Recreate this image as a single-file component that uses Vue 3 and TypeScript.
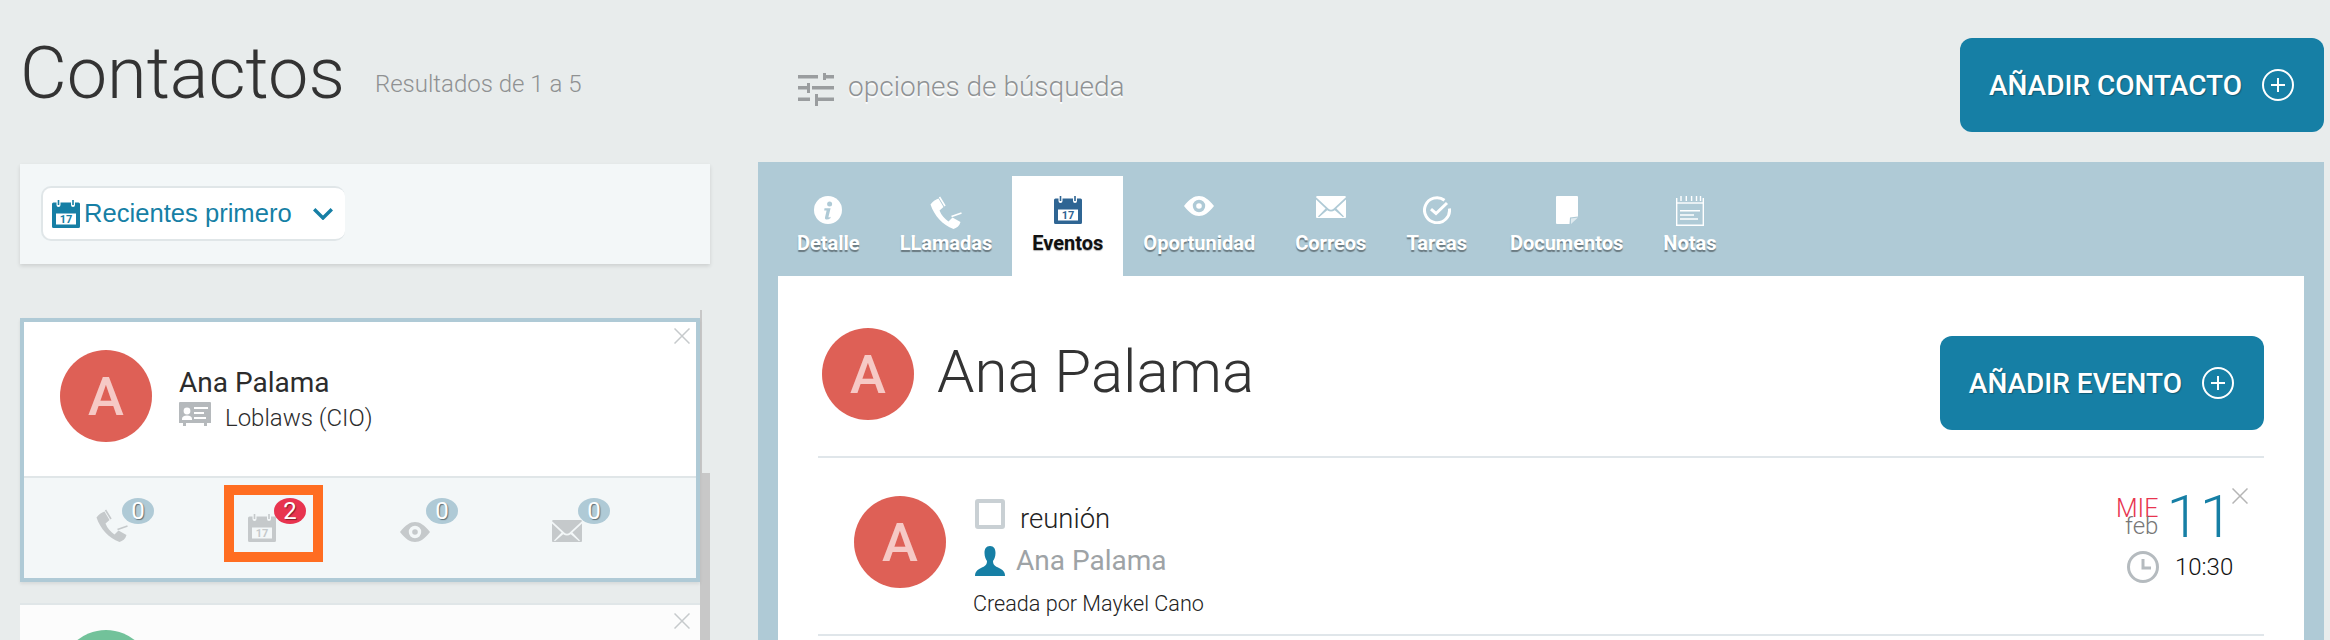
<script setup lang="ts">
type Tab = { label: string; icon: string; w: number; h: number; active?: boolean };
type Stat = { icon: string; w: number; h: number; count: number; hot?: boolean };

const tabs: Tab[] = [
    { label: "Detalle", icon: "i-info", w: 28, h: 28 },
    { label: "LLamadas", icon: "i-phone", w: 32, h: 33 },
    { label: "Eventos", icon: "i-calendar", w: 28, h: 28, active: true },
    { label: "Oportunidad", icon: "i-eye", w: 30, h: 20 },
    { label: "Correos", icon: "i-mail", w: 30, h: 22 },
    { label: "Tareas", icon: "i-task", w: 28, h: 28 },
    { label: "Documentos", icon: "i-doc", w: 22, h: 28 },
    { label: "Notas", icon: "i-notes", w: 28, h: 30 },
];

const stats: Stat[] = [
    { icon: "i-phone", w: 32, h: 33, count: 0 },
    { icon: "i-calendar", w: 28, h: 28, count: 2, hot: true },
    { icon: "i-eye", w: 30, h: 20, count: 0 },
    { icon: "i-mail", w: 30, h: 22, count: 0 },
];
</script>

<template>
    <svg class="defs" aria-hidden="true">
        <symbol id="i-calendar" viewBox="0 0 28 28">
            <path fill="currentColor" fill-rule="evenodd" d="M1.5 2.5H4.5V5a2 2 0 0 0 4 0V2.5H19V5a2 2 0 0 0 4 0V2.5H26.5A1.5 1.5 0 0 1 28 4V26.5A1.5 1.5 0 0 1 26.5 28H1.5A1.5 1.5 0 0 1 0 26.5V4A1.5 1.5 0 0 1 1.5 2.5ZM4 13.5V24.5H24V13.5Z" />
            <rect fill="currentColor" x="5.7" y="0" width="1.6" height="5" />
            <rect fill="currentColor" x="20.2" y="0" width="1.6" height="5" />
            <text x="14" y="23.2" text-anchor="middle" font-size="11" font-weight="700" font-family="Roboto, sans-serif" fill="currentColor">17</text>
        </symbol>
        <symbol id="i-phone" viewBox="0 0 32 33">
            <path fill="currentColor" d="M0.5 8.5C2.5 5.5 5.5 3.5 8.5 2.5L13.5 11L9.5 14.5C11.5 19.5 14.5 22.5 18.5 25.5L22.5 21.5L30.5 26C29.5 30 26.5 32 23.5 33C12.5 29 4.5 20 0.5 8.5Z" />
            <path fill="none" stroke="currentColor" stroke-width="1.6" d="M9.5 1L15 10M21.5 20.5L31.5 17" />
        </symbol>
        <symbol id="i-eye" viewBox="0 0 30 20">
            <path fill="currentColor" fill-rule="evenodd" d="M0 10C5.5 3 10 0 15 0C20 0 24.5 3 30 10C24.5 17 20 20 15 20C10 20 5.5 17 0 10ZM15 3.8A6.2 6.2 0 1 0 15 16.2A6.2 6.2 0 1 0 15 3.8ZM15 7.2A2.8 2.8 0 1 1 15 12.8A2.8 2.8 0 1 1 15 7.2Z" />
        </symbol>
        <symbol id="i-mail" viewBox="0 0 30 22">
            <path fill="currentColor" d="M1 0H29A1 1 0 0 1 29.6 1.4L17.5 12.8Q15 14.6 12.5 12.8L0.4 1.4A1 1 0 0 1 1 0Z" />
            <path fill="currentColor" d="M0 3.6V21A1 1 0 0 0 1 22H29A1 1 0 0 0 30 21V3.6L20.4 12.6L28 20.4L27 21.2L18.8 14.2Q15 17 11.2 14.2L3 21.2L2 20.4L9.6 12.6Z" />
        </symbol>
        <symbol id="i-info" viewBox="0 0 28 28">
            <circle cx="14" cy="14" r="14" fill="currentColor" />
            <circle cx="15.6" cy="8" r="2.5" fill="#afcad6" />
            <path fill="#afcad6" d="M10.5 12.2H16.6L14.5 20.8Q14.3 21.8 15.6 21.2L16.4 20.8L16.6 22Q14.6 23.8 12.2 23.6Q10.6 23.4 11 21.4L12.6 14.4H10.2Z" />
        </symbol>
        <symbol id="i-task" viewBox="0 0 28 28">
            <path fill="none" stroke="currentColor" stroke-width="3" d="M21.5 4.2A12.5 12.5 0 1 0 26.4 12.5" />
            <path fill="none" stroke="currentColor" stroke-width="3" d="M8 13.2L13 17.5L24 7" />
        </symbol>
        <symbol id="i-doc" viewBox="0 0 22 28">
            <path fill="currentColor" d="M1 0H21A1 1 0 0 1 22 1V20.5L14 21.5L13.5 28H1A1 1 0 0 1 0 27V1A1 1 0 0 1 1 0Z" />
            <path fill="currentColor" opacity="0.6" d="M15 22.5L22 21.5L15 28Z" />
        </symbol>
        <symbol id="i-notes" viewBox="0 0 28 30">
            <path fill="none" stroke="currentColor" stroke-width="1.4" d="M0.7 2V29.3H27.3V2" />
            <path fill="none" stroke="currentColor" stroke-width="1.4" d="M0.7 7H27.3" />
            <path fill="none" stroke="currentColor" stroke-width="1.4" d="M5 0V5M10.3 0V5M15.6 0V5M20.5 0V5M24.5 0V5" />
            <path fill="none" stroke="currentColor" stroke-width="1.4" d="M4 14.7H24M4 19H18M4 23H22" />
        </symbol>
        <symbol id="i-plus" viewBox="0 0 32 32">
            <circle cx="16" cy="16" r="15" fill="none" stroke="currentColor" stroke-width="2" />
            <path fill="none" stroke="currentColor" stroke-width="2" d="M16 9V23M9 16H23" />
        </symbol>
        <symbol id="i-close" viewBox="0 0 16 16">
            <path fill="none" stroke="currentColor" stroke-width="1.5" d="M0.5 0.5L15.5 15.5M15.5 0.5L0.5 15.5" />
        </symbol>
    </svg>

    <div class="page">
        <aside class="left">
            <header class="left-head">
                <h1 class="title">Contactos</h1>
                <span class="results">Resultados de 1 a 5</span>
            </header>

            <div class="filter">
                <div class="select">
                    <svg class="select-cal" width="28" height="28"><use href="#i-calendar" /></svg>
                    <span class="select-text">Recientes primero</span>
                    <svg class="chevron" width="20" height="12" viewBox="0 0 20 12">
                        <path fill="none" stroke="currentColor" stroke-width="3.4" d="M1.2 1.2L10 10L18.8 1.2" />
                    </svg>
                </div>
            </div>

            <div class="list-wrap">
                <div class="list">
                    <article class="card is-active">
                        <svg class="close" width="16" height="16"><use href="#i-close" /></svg>
                        <div class="card-main">
                            <div class="avatar red">A</div>
                            <div class="card-info">
                                <div class="card-name">Ana Palama</div>
                                <div class="card-company">
                                    <svg width="32" height="24" viewBox="0 0 32 24">
                                        <path fill="#b5b9bc" d="M1 0H31A1 1 0 0 1 32 1V21H28V24H25V21H7V24H4V21H0V1A1 1 0 0 1 1 0Z" />
                                        <circle cx="8" cy="9" r="3.4" fill="#fff" />
                                        <path fill="#fff" d="M3 17Q3 13.5 8 13.5Q13 13.5 13 17V18H3Z" />
                                        <path fill="#fff" d="M15 5H29V7H15ZM15 10H25V12H15ZM15 15H27V17H15Z" />
                                    </svg>
                                    <span>Loblaws (CIO)</span>
                                </div>
                            </div>
                        </div>
                        <div class="card-foot">
                            <div v-for="stat in stats" :key="stat.icon" class="stat">
                                <svg class="stat-icon" :width="stat.w" :height="stat.h"><use :href="`#${stat.icon}`" /></svg>
                                <span class="badge" :class="{ hot: stat.hot }">{{ stat.count }}</span>
                                <span v-if="stat.hot" class="highlight"></span>
                            </div>
                        </div>
                    </article>

                    <article class="card next">
                        <svg class="close" width="16" height="16"><use href="#i-close" /></svg>
                        <div class="avatar green"></div>
                    </article>
                </div>
                <div class="rail">
                    <div class="rail-thin"></div>
                    <div class="rail-thick"></div>
                </div>
            </div>
        </aside>

        <main class="right">
            <div class="top-bar">
                <div class="search-opts">
                    <svg width="36" height="33" viewBox="0 0 36 33">
                        <path fill="#9a9d9f" d="M0 2H20V5.5H0ZM25 0H28V7H25ZM28 2H36V5.5H28ZM0 13H9V16.5H0ZM9 10H12V20H9ZM14 13H36V16.5H14ZM0 24.5H12V28H0ZM17 21H20V33H17ZM20 24.5H36V28H20Z" />
                    </svg>
                    <span>opciones de búsqueda</span>
                </div>
                <button class="btn">
                    <span>AÑADIR CONTACTO</span>
                    <svg width="32" height="32"><use href="#i-plus" /></svg>
                </button>
            </div>

            <section class="panel">
                <nav class="tabs">
                    <div v-for="tab in tabs" :key="tab.label" class="tab" :class="{ active: tab.active }">
                        <div class="tab-icon">
                            <svg :width="tab.w" :height="tab.h"><use :href="`#${tab.icon}`" /></svg>
                        </div>
                        <span class="tab-label">{{ tab.label }}</span>
                    </div>
                </nav>

                <div class="content">
                    <div class="content-head">
                        <div class="avatar red">A</div>
                        <h2 class="content-name">Ana Palama</h2>
                        <button class="btn add-event">
                            <span>AÑADIR EVENTO</span>
                            <svg width="32" height="32"><use href="#i-plus" /></svg>
                        </button>
                    </div>

                    <div class="event">
                        <div class="avatar red">A</div>
                        <div class="event-body">
                            <div class="event-title">
                                <span class="checkbox"></span>
                                <span class="event-text">reunión</span>
                            </div>
                            <div class="event-person">
                                <svg width="30" height="30" viewBox="0 0 30 30">
                                    <path fill="#167fa5" d="M15 0C11 0 9.5 3 9.5 7C9.5 11 11 13.5 12 15C12 19 10 20 6 22C2 24 0 26 0 30H30C30 26 28 24 24 22C20 20 18 19 18 15C19 13.5 20.5 11 20.5 7C20.5 3 19 0 15 0Z" />
                                </svg>
                                <span>Ana Palama</span>
                            </div>
                            <div class="event-author">Creada por Maykel Cano</div>
                        </div>
                        <div class="event-date">
                            <svg class="close event-close" width="16" height="16"><use href="#i-close" /></svg>
                            <div class="date-row">
                                <div class="date-words">
                                    <span class="weekday">MIE</span>
                                    <span class="month">feb</span>
                                </div>
                                <span class="day">11</span>
                            </div>
                            <div class="time-row">
                                <svg width="32" height="32" viewBox="0 0 32 32">
                                    <circle cx="16" cy="16" r="14.5" fill="none" stroke="#b5bbbf" stroke-width="3" />
                                    <path fill="none" stroke="#b5bbbf" stroke-width="3" d="M16 8V17H24" />
                                </svg>
                                <span>10:30</span>
                            </div>
                        </div>
                    </div>
                </div>
            </section>
        </main>
    </div>
</template>

<style scoped>
.defs {
    position: absolute;
    width: 0;
    height: 0;
}

.page {
    width: 2330px;
    height: 640px;
    overflow: hidden;
    display: flex;
    background: #e8ecec;
    font-family: Roboto, "Liberation Sans", sans-serif;
    color: #333;
}

.left {
    width: 690px;
    margin-left: 20px;
    flex: none;
    display: flex;
    flex-direction: column;
}

.left-head {
    height: 164px;
    padding-top: 38px;
    box-sizing: border-box;
    display: flex;
    align-items: flex-start;
    gap: 30px;
}

.title {
    margin: 0;
    font-size: 72px;
    line-height: 72px;
    font-weight: 300;
    color: #333;
}

.results {
    margin-top: 34px;
    font-size: 24px;
    line-height: 24px;
    font-weight: 300;
    color: #8f9192;
}

.filter {
    height: 100px;
    flex: none;
    box-sizing: border-box;
    padding: 22px 21px;
    background: #f3f7f8;
    box-shadow: 0 2px 4px rgba(0, 0, 0, 0.12);
}

.select {
    width: 304px;
    height: 55px;
    box-sizing: border-box;
    display: flex;
    align-items: center;
    padding-left: 9px;
    background: #fff;
    border: 2px solid #e0e6e8;
    border-right: none;
    border-radius: 10px;
    color: #167fa5;
}

.select-cal {
    flex: none;
}

.select-text {
    margin-left: 4px;
    font-family: "Liberation Sans", Arial, sans-serif;
    font-size: 25.6px;
}

.chevron {
    margin-left: 21px;
    flex: none;
}

.list-wrap {
    flex: 1;
    min-height: 0;
    display: flex;
}

.list {
    width: 680px;
    flex: none;
    padding-top: 54px;
}

.rail {
    width: 10px;
    flex: none;
    margin-top: 46px;
    display: flex;
    flex-direction: column;
}

.rail-thin {
    width: 2px;
    height: 163px;
    background: #c8c8c8;
}

.rail-thick {
    flex: 1;
    background: #c8c8c8;
}

.card {
    position: relative;
    box-sizing: border-box;
    background: #fff;
}

.card.is-active {
    height: 264px;
    border: 4px solid #afcad6;
    box-shadow: 0 2px 3px rgba(0, 0, 0, 0.08);
    display: flex;
    flex-direction: column;
}

.card.next {
    margin-top: 21px;
    height: 200px;
    border-top: 2px solid #e0e6e8;
    background: #fcfcfc;
    padding: 25px 0 0 40px;
}

.close {
    position: absolute;
    top: 6px;
    right: 6px;
    color: #c6cacc;
}

.card.next .close {
    top: 8px;
    right: 10px;
}

.card-main {
    height: 154px;
    box-sizing: border-box;
    flex: none;
    padding: 28px 0 0 36px;
    display: flex;
    gap: 27px;
}

.avatar {
    width: 92px;
    height: 92px;
    flex: none;
    border-radius: 50%;
    display: flex;
    align-items: center;
    justify-content: center;
    font-size: 54px;
    font-weight: 500;
    color: #f6c9c5;
}

.avatar.red {
    background: #de6056;
}

.avatar.green {
    background: #72c29a;
}

.card-name {
    margin-top: 17px;
    font-size: 28px;
    line-height: 32px;
    color: #2c2c2c;
}

.card-company {
    margin-top: 5px;
    display: flex;
    align-items: flex-start;
    gap: 14px;
    font-size: 24px;
    font-weight: 300;
    line-height: 28px;
    color: #2c2c2c;
}

.card-company svg {
    margin-top: -2px;
}

.card-foot {
    flex: 1;
    background: #f3f7f8;
    border-top: 2px solid #e0e6e8;
    padding: 20px 0 0 72px;
    display: flex;
}

.stat {
    position: relative;
    width: 152px;
    height: 44px;
    flex: none;
    display: flex;
    align-items: flex-end;
}

.stat-icon {
    color: #c5c9cb;
}

.badge {
    position: absolute;
    top: 0;
    left: 26px;
    width: 32px;
    height: 26px;
    border-radius: 50%;
    background: #afcad6;
    color: #fff;
    font-size: 24px;
    line-height: 26px;
    text-align: center;
    text-shadow: 1px 1px 1px rgba(0, 0, 0, 0.45);
}

.badge.hot {
    background: #e8344f;
}

.highlight {
    position: absolute;
    left: -24px;
    top: -13px;
    width: 99px;
    height: 77px;
    box-sizing: border-box;
    border: 10px solid #ff6d21;
}

.right {
    width: 1566px;
    margin-left: 48px;
    flex: none;
    display: flex;
    flex-direction: column;
}

.top-bar {
    height: 162px;
    flex: none;
    box-sizing: border-box;
    padding: 38px 0 0 40px;
    display: flex;
    justify-content: space-between;
    align-items: flex-start;
}

.search-opts {
    margin-top: 33px;
    display: flex;
    align-items: center;
    gap: 14px;
    font-size: 28px;
    font-weight: 300;
    line-height: 32px;
    color: #8f9294;
    text-shadow: 0 2px 1px #fff;
}

.search-opts span {
    margin-bottom: 4px;
}

.btn {
    height: 94px;
    padding: 0 30px 0 29px;
    display: flex;
    align-items: center;
    gap: 20px;
    border: none;
    border-radius: 12px;
    background: #167fa5;
    color: #fff;
    font-family: inherit;
    font-size: 28px;
    font-weight: 500;
    text-shadow: 1px 1px 1px rgba(0, 0, 0, 0.3);
}

.panel {
    flex: 1;
    min-height: 0;
    background: #afcad6;
    padding: 14px 20px 0;
    display: flex;
    flex-direction: column;
}

.tabs {
    display: flex;
    height: 100px;
    flex: none;
    margin-left: -1px;
}

.tab {
    padding: 20px 20px 0;
    display: flex;
    flex-direction: column;
    align-items: center;
    color: #fff;
}

.tab:nth-child(7) {
    margin-left: 3px;
}

.tab.active {
    background: #fff;
    color: #2f6593;
}

.tab-icon {
    height: 35px;
    display: flex;
    align-items: flex-start;
}

.tab-label {
    font-size: 20px;
    line-height: 24px;
    font-weight: 700;
    color: #fff;
    text-shadow: 0 2px 1px rgba(0, 0, 0, 0.4);
}

.tab.active .tab-label {
    color: #111;
    text-shadow: 0 1px 1px rgba(0, 0, 0, 0.3);
}

.content {
    flex: 1;
    background: #fff;
    padding: 0 40px;
}

.content-head {
    height: 182px;
    box-sizing: border-box;
    padding: 52px 0 0 4px;
    display: flex;
    align-items: flex-start;
    border-bottom: 2px solid #e0e6ea;
}

.content-name {
    margin: 14px 0 0 23px;
    font-size: 60px;
    line-height: 60px;
    font-weight: 300;
    color: #333;
}

.add-event {
    margin: 8px 0 0 auto;
}

.event {
    height: 178px;
    box-sizing: border-box;
    padding: 38px 31px 0 36px;
    display: flex;
    border-bottom: 2px solid #e0e6ea;
}

.event-body {
    margin-left: 29px;
    margin-top: 3px;
}

.event-title {
    display: flex;
    align-items: flex-start;
    gap: 15px;
}

.checkbox {
    width: 30px;
    height: 30px;
    flex: none;
    box-sizing: border-box;
    border: 4px solid #c9d0d4;
    border-radius: 3px;
}

.event-text {
    margin-top: 5px;
    font-size: 27.5px;
    line-height: 30px;
    font-weight: 300;
    color: #222;
}

.event-person {
    margin-top: 12px;
    display: flex;
    align-items: center;
    gap: 11px;
    font-size: 28px;
    line-height: 30px;
    color: #9ea3a6;
}

.event-author {
    margin-top: 16px;
    margin-left: -2px;
    font-size: 21.6px;
    line-height: 24px;
    font-weight: 300;
    color: #222;
}

.event-date {
    position: relative;
    margin: -9px 0 0 auto;
}

.event-close {
    top: 1px;
    right: -15px;
    color: #b5b5b5;
}

.date-row {
    display: flex;
    gap: 8px;
    height: 60px;
}

.date-words {
    margin-top: 12px;
    display: flex;
    flex-direction: column;
    align-items: flex-end;
    font-weight: 300;
}

.weekday {
    font-size: 25px;
    line-height: 19px;
    color: #e8344f;
}

.month {
    font-size: 24px;
    line-height: 17px;
    color: #777;
}

.day {
    font-size: 60px;
    line-height: 60px;
    font-weight: 300;
    color: #167fa5;
}

.time-row {
    margin: 4px -10px 0 11px;
    display: flex;
    align-items: center;
    gap: 16px;
    font-size: 24px;
    font-weight: 300;
    color: #111;
}
</style>

<style>
html,
body {
    margin: 0;
    overflow: hidden;
}
</style>
